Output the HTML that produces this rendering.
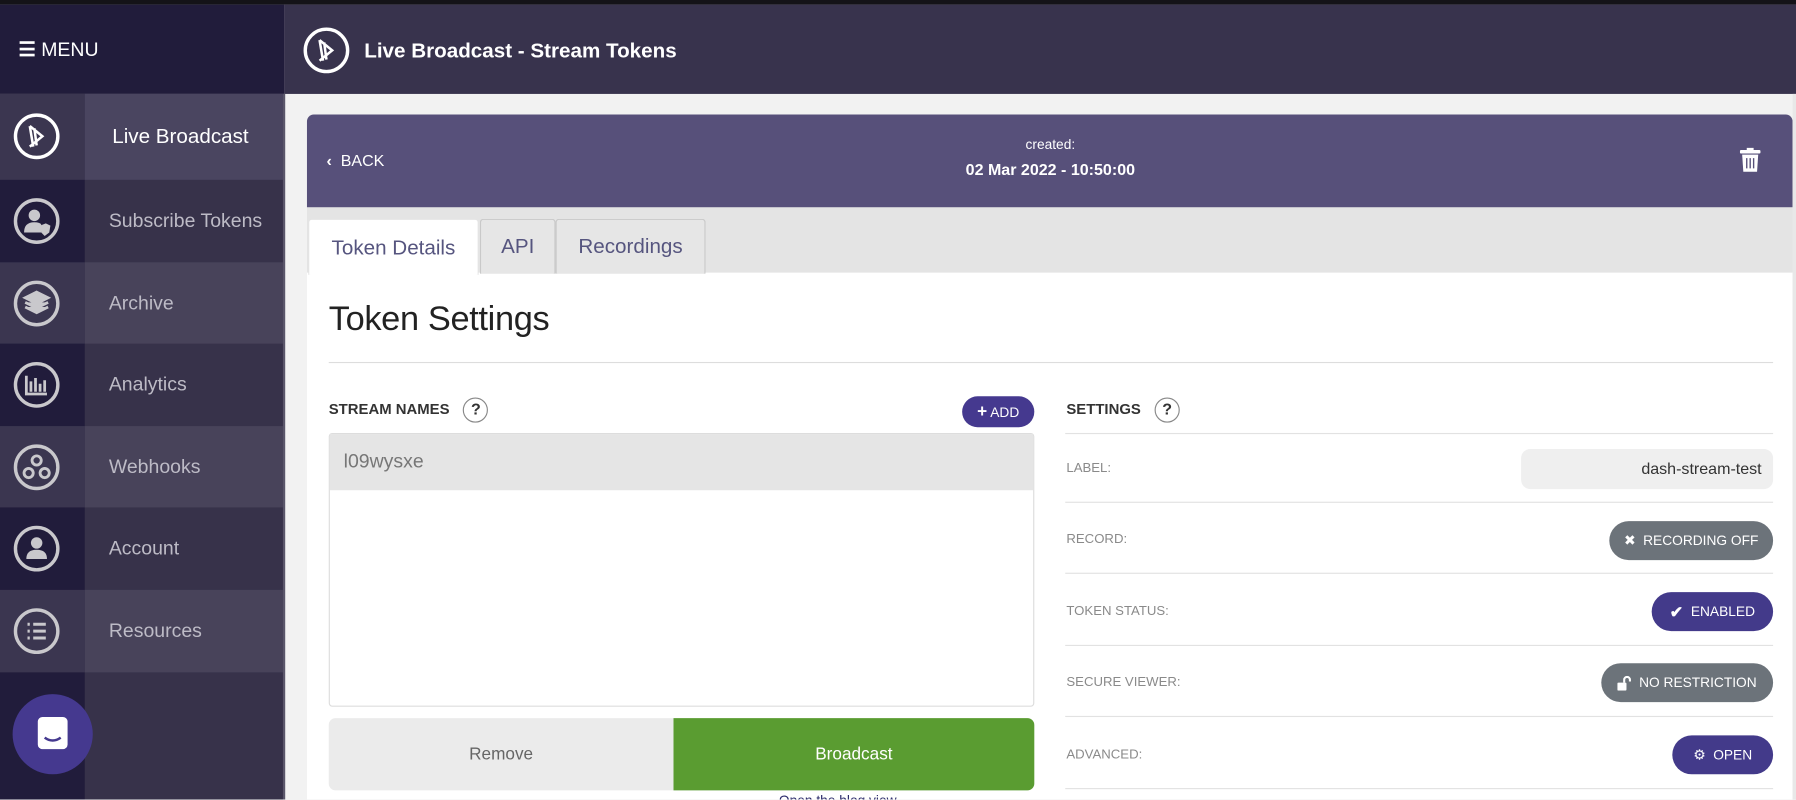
<!DOCTYPE html>
<html><head><meta charset="utf-8"><style>
*{box-sizing:border-box;margin:0;padding:0}
html,body{width:1796px;height:800px;overflow:hidden;background:#f2f2f2;font-family:"Liberation Sans",sans-serif}
#w{position:absolute;left:0;top:0;width:1568px;height:698px;transform:scale(1.14541);transform-origin:0 0;background:#f2f2f2;overflow:hidden}
.a{position:absolute}
.sb{left:0;width:248px}
.ic{left:0;width:74px}
.lab{left:74px;width:174px;color:#bdbbc6;font-size:17px;display:flex;align-items:center;padding-left:21px}
.circ{position:absolute;left:12px;width:40px;height:40px;border-radius:50%;border:3px solid #c9c8cc}
.row{position:absolute;left:930px;width:618px;border-top:1.5px solid #e2e2e2}
.rl{position:absolute;left:931px;font-size:11.5px;color:#8a8a8a}
.pill{position:absolute;border-radius:17px;color:#fff;font-size:12px;display:flex;align-items:center;justify-content:center;height:34px}
.q{display:inline-block;width:22px;height:22px;border:1.5px solid #888;border-radius:50%;text-align:center;font-size:14px;line-height:19px;font-weight:bold;color:#333;margin-left:12px;vertical-align:middle}
.tab{position:absolute;top:191px;height:48px;border:1px solid #c9c9c9;border-bottom:none;background:#e6e6e6;color:#56557f;font-size:18px;display:flex;align-items:center;justify-content:center;border-radius:3px 3px 0 0}
</style></head><body><div id="w">
<div class="a" style="left:0;top:0;width:1568px;height:4px;background:#141318"></div>
<div class="a sb" style="top:4px;height:78px;background:#211c3b;color:#fff;font-size:17px;padding:30px 0 0 16px"><b>&#9776;</b> MENU</div>
<div class="a sb" style="top:82px;height:616px;background:#37324a"></div>
<div class="a ic" style="top:82px;height:616px;background:#211c3b"></div>
<div class="a ic" style="top:82px;height:75px;background:#3b3650"></div>
<div class="a lab" style="top:82px;height:75px;background:#4a4560;color:#fff;font-size:18px;padding-left:24px">Live Broadcast</div>
<div class="a lab" style="top:157px;height:72px">Subscribe Tokens</div>
<div class="a ic" style="top:229px;height:71px;background:#3b3650"></div>
<div class="a lab" style="top:229px;height:71px;background:#48435a">Archive</div>
<div class="a lab" style="top:300px;height:72px">Analytics</div>
<div class="a ic" style="top:372px;height:71px;background:#3b3650"></div>
<div class="a lab" style="top:372px;height:71px;background:#48435a">Webhooks</div>
<div class="a lab" style="top:443px;height:72px">Account</div>
<div class="a ic" style="top:515px;height:72px;background:#3b3650"></div>
<div class="a lab" style="top:515px;height:72px;background:#48435a">Resources</div>
<div class="circ" style="top:99px;border-color:#fff"><svg width="34" height="34" viewBox="0 0 34 34" style="position:absolute;left:0;top:0"><path d="M11 8 L22 17 L11 26 M11 8 L14 26 M15 10 L17 25" stroke="#fff" stroke-width="2.2" fill="none"/></svg></div>
<div class="circ" style="top:173px"><svg width="34" height="34" viewBox="0 0 34 34" style="position:absolute;left:0;top:0"><circle cx="15" cy="12" r="5" fill="#c9c8cc"/><path d="M6 27 Q6 18 15 18 Q20 18 21 20 L21 27Z" fill="#c9c8cc"/><path d="M20 21 L25 19 L29 21 L28 27 L24 30 L21 27Z" fill="#c9c8cc"/></svg></div>
<div class="circ" style="top:245px"><svg width="34" height="34" viewBox="0 0 34 34" style="position:absolute;left:0;top:0"><path d="M17 7 L27 12 L17 17 L7 12Z M7 16 L17 21 L27 16 M7 20 L17 25 L27 20" stroke="#c9c8cc" stroke-width="2.4" fill="#c9c8cc"/></svg></div>
<div class="circ" style="top:316px"><svg width="34" height="34" viewBox="0 0 34 34" style="position:absolute;left:0;top:0"><path d="M8 9 V25 H26" stroke="#c9c8cc" stroke-width="2.4" fill="none"/><path d="M12 14v9M16 11v12M20 16v7M24 13v10" stroke="#c9c8cc" stroke-width="2.4"/></svg></div>
<div class="circ" style="top:388px"><svg width="34" height="34" viewBox="0 0 34 34" style="position:absolute;left:0;top:0"><circle cx="17" cy="11" r="4" stroke="#c9c8cc" stroke-width="2.5" fill="none"/><circle cx="10" cy="22" r="4" stroke="#c9c8cc" stroke-width="2.5" fill="none"/><circle cx="24" cy="22" r="4" stroke="#c9c8cc" stroke-width="2.5" fill="none"/></svg></div>
<div class="circ" style="top:459px"><svg width="34" height="34" viewBox="0 0 34 34" style="position:absolute;left:0;top:0"><circle cx="17" cy="12" r="5" fill="#c9c8cc"/><path d="M8 26 Q8 18 17 18 Q26 18 26 26Z" fill="#c9c8cc"/></svg></div>
<div class="circ" style="top:531px"><svg width="34" height="34" viewBox="0 0 34 34" style="position:absolute;left:0;top:0"><path d="M9 11h2M9 17h2M9 23h2M14 11h11M14 17h11M14 23h11" stroke="#c9c8cc" stroke-width="2.6"/></svg></div>
<div class="a" style="left:11px;top:606px;width:70px;height:70px;border-radius:50%;background:#45398f"><div style="position:absolute;left:22px;top:20px;width:26px;height:28px;background:#fff;border-radius:4px"></div><svg width="70" height="70" style="position:absolute;left:0;top:0"><path d="M28 38 Q35 43 42 38" stroke="#45398f" stroke-width="2.2" fill="none"/></svg></div>
<div class="a" style="left:247px;top:82px;width:2px;height:616px;background:#5a566a"></div>
<div class="a" style="left:248px;top:4px;width:1320px;height:78px;background:#38334d"></div>
<div class="a" style="left:265px;top:24px;width:40px;height:40px;border:3px solid #fff;border-radius:50%"><svg width="34" height="34" viewBox="0 0 34 34" style="position:absolute;left:0;top:0"><path d="M11 8 L22 17 L11 26 M11 8 L14 26 M15 10 L17 25" stroke="#fff" stroke-width="2.2" fill="none"/></svg></div>
<div class="a" style="left:318px;top:34px;color:#fff;font-size:18px;font-weight:bold">Live Broadcast - Stream Tokens</div>
<div class="a" style="left:268px;top:100px;width:1297px;height:81px;background:#57507a;border-radius:6px 6px 0 0"></div>
<div class="a" style="left:285px;top:132px;color:#fff;font-size:14px"><b>&#8249;</b>&nbsp; BACK</div>
<div class="a" style="left:817px;top:119px;width:200px;text-align:center;color:#fff;font-size:12px">created:</div>
<div class="a" style="left:817px;top:140px;width:200px;text-align:center;color:#fff;font-size:14px;font-weight:bold">02 Mar 2022 - 10:50:00</div>
<svg class="a" style="left:1519px;top:129px" width="18" height="22" viewBox="0 0 18 22"><rect x="0" y="2" width="18" height="3" rx="1" fill="#fff"/><rect x="6" y="0" width="6" height="3" fill="#fff"/><path d="M2 6h14l-1 15H3z" fill="#fff"/><path d="M6 9v9M9 9v9M12 9v9" stroke="#57507a" stroke-width="1.2"/></svg>
<div class="a" style="left:268px;top:181px;width:1297px;height:58px;background:#e4e4e4"></div>
<div class="a" style="left:268px;top:238px;width:1297px;height:460px;background:#fff"></div>
<div class="tab" style="left:269px;width:149px;background:#fff;border-color:#e4e4e4;height:49px">Token Details</div>
<div class="tab" style="left:419px;width:66px">API</div>
<div class="tab" style="left:485px;width:131px">Recordings</div>
<div class="a" style="left:287px;top:262px;font-size:30px;color:#222;font-weight:300;letter-spacing:-0.3px">Token Settings</div>
<div class="a" style="left:287px;top:316px;width:1261px;height:1px;background:#ddd"></div>
<div class="a" style="left:287px;top:347px;font-size:13px;font-weight:bold;color:#333">STREAM NAMES<span class="q">?</span></div>
<div class="a" style="left:840px;top:346px;width:63px;height:27px;border-radius:14px;background:#45398f;color:#fff;font-size:12px;text-align:center;line-height:27px"><b style="font-size:15px">+</b> ADD</div>
<div class="a" style="left:287px;top:378px;width:616px;height:239px;border:1px solid #ddd;border-radius:3px"></div>
<div class="a" style="left:288px;top:379px;width:614px;height:49px;background:#e5e5e5;color:#777;font-size:17px;padding:14px 0 0 12px">l09wysxe</div>
<div class="a" style="left:287px;top:627px;width:301px;height:63px;background:#ebebeb;border-radius:6px 0 0 6px;color:#666;font-size:15px;text-align:center;line-height:63px">Remove</div>
<div class="a" style="left:588px;top:627px;width:315px;height:63px;background:#5a9c31;border-radius:0 6px 6px 0;color:#fff;font-size:15px;text-align:center;line-height:63px">Broadcast</div>
<div class="a" style="left:680px;top:692px;font-size:12px;color:#2a2a6a">Open the blog view</div>
<div class="a" style="left:931px;top:347px;font-size:13px;font-weight:bold;color:#333">SETTINGS<span class="q">?</span></div>
<div class="row" style="top:378px"></div>
<div class="row" style="top:438px"></div>
<div class="row" style="top:500px"></div>
<div class="row" style="top:563px"></div>
<div class="row" style="top:625px"></div>
<div class="row" style="top:688px"></div>
<div class="rl" style="top:403px">LABEL:</div>
<div class="a" style="left:1328px;top:392px;width:220px;height:35px;background:#efefef;border-radius:8px;color:#333;font-size:14px;text-align:right;padding:9px 10px 0 0">dash-stream-test</div>
<div class="rl" style="top:465px">RECORD:</div>
<div class="pill" style="left:1405px;top:455px;width:143px;background:#6c737a">&#10006;&nbsp; RECORDING OFF</div>
<div class="rl" style="top:528px">TOKEN STATUS:</div>
<div class="pill" style="left:1442px;top:517px;width:106px;background:#433a8a"><b style="font-size:14px">&#10004;</b>&nbsp; ENABLED</div>
<div class="rl" style="top:590px">SECURE VIEWER:</div>
<div class="pill" style="left:1398px;top:579px;width:150px;background:#6c737a"><svg width="12" height="13" viewBox="0 0 12 13"><path d="M6 6V3.5a2.5 2.5 0 0 1 5 0V5" stroke="#fff" stroke-width="1.8" fill="none"/><rect x="0" y="6" width="8" height="7" rx="1" fill="#fff"/></svg>&nbsp; NO RESTRICTION</div>
<div class="rl" style="top:653px">ADVANCED:</div>
<div class="pill" style="left:1460px;top:642px;width:88px;background:#433a8a">&#9881;&nbsp; OPEN</div>
<div class="a" style="left:1565px;top:82px;width:3px;height:616px;background:#e8e8e8"></div>
</div></body></html>
